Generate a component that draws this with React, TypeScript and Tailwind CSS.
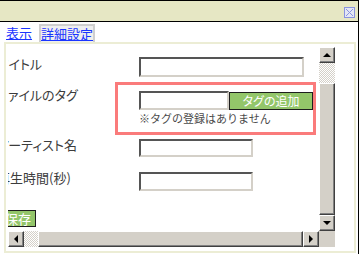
import React from "react";

const font = { fontFamily: '"Noto Sans CJK JP", "Noto Sans", sans-serif' };

function ScrollButton({ dir }: { dir: "up" | "down" | "left" | "right" }) {
  const arrow = {
    up: "border-l-[4px] border-r-[4px] border-b-[4px] border-l-transparent border-r-transparent border-b-black",
    down: "border-l-[4px] border-r-[4px] border-t-[4px] border-l-transparent border-r-transparent border-t-black",
    left: "border-t-[4px] border-b-[4px] border-r-[4px] border-t-transparent border-b-transparent border-r-black",
    right: "border-t-[4px] border-b-[4px] border-l-[4px] border-t-transparent border-b-transparent border-l-black",
  }[dir];
  return (
    <div className="w-[16px] h-[16px] shrink-0 flex items-center justify-center bg-[#d4d0c8] border border-t-white border-l-white border-b-[#404040] border-r-[#404040] shadow-[inset_-1px_-1px_0_#808080]">
      <div className={`w-0 h-0 ${arrow}`} />
    </div>
  );
}

const track =
  "bg-[repeating-conic-gradient(#d4d0c8_0_25%,#ffffff_0_50%)] bg-[length:2px_2px]";
const thumb =
  "bg-[#d4d0c8] border border-t-white border-l-white border-b-[#404040] border-r-[#404040] shadow-[inset_-1px_-1px_0_#808080]";
const input =
  "bg-white border-2 border-t-[#555] border-l-[#555] border-b-[#d4d0c8] border-r-[#d4d0c8]";
const label = "text-[13px] leading-[13px] whitespace-nowrap [font-feature-settings:'palt']";

export default function App() {
  return (
    <div className="w-[361px] h-[254px] bg-white overflow-hidden" style={font}>
      <div className="w-[359px] h-[254px] border-t border-r border-black flex flex-col">
        {/* title bar */}
        <div className="h-[21px] shrink-0 bg-[#e6e7c4] border-b border-black flex items-center justify-end pr-[3px]">
          <div className="w-[11px] h-[11px] bg-[#e4e7f4] border border-[#8a93e0] relative mt-[3px]">
            <svg viewBox="0 0 9 9" className="absolute inset-0 w-full h-full">
              <path d="M1 1L8 8M8 1L1 8" stroke="#8a93e0" strokeWidth="1" />
            </svg>
          </div>
        </div>

        {/* tabs */}
        <div className="h-[20px] shrink-0 flex items-end pl-[6px] text-[13px] leading-none">
          <a className="text-[#1a35ff] underline pb-[3px] mr-[7px]">表示</a>
          <div className="h-[19px] w-[56px] bg-[#efefef] border-2 border-b-0 border-[#cfcfcf] flex items-start justify-center pt-[1px] -mb-[1px]">
            <a className="text-[#1a35ff] underline">詳細設定</a>
          </div>
        </div>

        {/* panel */}
        <div className="ml-[4px] w-[352px] h-[211px] border-2 border-[#ecedd5] pt-[3px] pl-[2px] pr-[19px] pb-[4px]">
          <div className="w-[327px] h-[200px] flex flex-col">
            <div className="flex h-[184px]">
              {/* viewport */}
              <div className="w-[311px] h-[184px] overflow-hidden">
                <div className="ml-[-11px] w-[400px] pt-[10px] flex flex-col text-[#3c3c3c]">
                  <div className="flex items-start h-[20px]">
                    <span className={`${label} w-[142px]`}>タイトル</span>
                    <div className={`${input} w-[165px] h-[20px]`} />
                  </div>

                  <div className="flex items-start mt-[5px]">
                    <span className={`${label} w-[118px] mt-[6px]`}>ファイルのタグ</span>
                    <div className="w-[201px] h-[53px] border-[3px] border-[#fa7b7b] pl-[21px] pt-[6px]">
                      <div className="flex items-center">
                        <div className={`${input} w-[90px] h-[19px]`} />
                        <button className="w-[84px] h-[18px] bg-[#93c66a] border border-[#1e1e1e] text-white text-[12px] leading-none [font-feature-settings:'palt']">
                          タグの追加
                        </button>
                      </div>
                      <div className="text-[11px] leading-none mt-[3px] text-[#4a4a4a] whitespace-nowrap">
                        ※タグの登録はありません
                      </div>
                    </div>
                  </div>

                  <div className="flex items-start h-[18px] mt-[4px]">
                    <span className={`${label} w-[142px] -mt-[1px]`}>アーティスト名</span>
                    <div className={`${input} w-[114px] h-[18px]`} />
                  </div>

                  <div className="flex items-start h-[19px] mt-[15px]">
                    <span className={`${label} w-[142px] -mt-[1px]`}>再生時間(秒)</span>
                    <div className={`${input} w-[114px] h-[19px]`} />
                  </div>

                  <div className="mt-[14px] ml-[3px]">
                    <button className="h-[17px] px-[4px] bg-[#93c66a] border border-[#1e1e1e] text-white text-[13px] leading-none">
                      保存
                    </button>
                  </div>
                </div>
              </div>

              {/* vertical scrollbar */}
              <div className="w-[16px] h-[184px] flex flex-col">
                <ScrollButton dir="up" />
                <div className={`${track} h-[20px]`} />
                <div className={`${thumb} flex-1`} />
                <ScrollButton dir="down" />
              </div>
            </div>

            {/* horizontal scrollbar */}
            <div className="flex h-[16px]">
              <div className="w-[311px] flex">
                <ScrollButton dir="left" />
                <div className={`${track} w-[14px]`} />
                <div className={`${thumb} flex-1`} />
                <ScrollButton dir="right" />
              </div>
              <div className="w-[16px] bg-[#d4d0c8]" />
            </div>
          </div>
        </div>
      </div>
    </div>
  );
}
